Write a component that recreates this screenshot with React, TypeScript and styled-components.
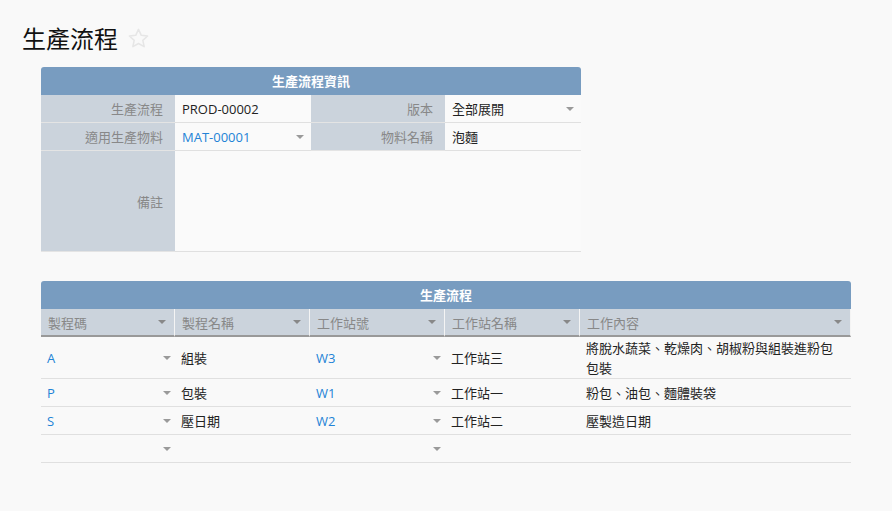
import React from "react";
import styled, { createGlobalStyle } from "styled-components";

const GlobalStyle = createGlobalStyle`
  html, body {
    margin: 0;
    padding: 0;
    background: #f9f9f9;
  }
  body {
    font-family: "Open Sans", "Noto Sans CJK TC", sans-serif;
    font-size: 13px;
    color: #222;
  }
`;

const Page = styled.div`
  padding: 18px 0 40px 41px;
  width: 892px;
  box-sizing: border-box;
`;

const TitleBar = styled.div`
  display: flex;
  align-items: center;
  gap: 9px;
  margin-left: -19px;
  height: 40px;
`;

const Title = styled.h1`
  margin: 0;
  font-family: "Noto Sans CJK TC", sans-serif;
  font-weight: 400;
  font-size: 24px;
  line-height: 40px;
  color: #111;
`;

const Section = styled.div<{ $width: number; $gap?: number }>`
  width: ${(p) => p.$width}px;
  margin-top: ${(p) => p.$gap ?? 0}px;
`;

const SectionHeader = styled.div`
  height: 28px;
  line-height: 28px;
  background: #789cc0;
  color: #fff;
  font-weight: 700;
  text-align: center;
  font-size: 13px;
  border-radius: 3px 3px 0 0;
`;

const FormGrid = styled.div`
  display: grid;
  grid-template-columns: 134px 136px 134px 136px;
`;

const Label = styled.div<{ $tall?: boolean }>`
  height: ${(p) => (p.$tall ? 101 : 28)}px;
  box-sizing: border-box;
  background: #cbd3dc;
  color: #888;
  padding-right: 12px;
  display: flex;
  align-items: center;
  justify-content: flex-end;
  border-bottom: 1px solid #e4e4e4;
`;

const Value = styled.div<{ $span?: number; $tall?: boolean; $link?: boolean }>`
  grid-column: span ${(p) => p.$span ?? 1};
  height: ${(p) => (p.$tall ? 101 : 28)}px;
  box-sizing: border-box;
  padding: 0 7px 0 7px;
  display: flex;
  align-items: center;
  color: ${(p) => (p.$link ? "#2383d6" : "#222")};
  background: #fafafa;
  border-bottom: 1px solid #e0e0e0;
`;

const Caret = styled.span<{ $light?: boolean }>`
  margin-left: auto;
  width: 0;
  height: 0;
  border-left: 4px solid transparent;
  border-right: 4px solid transparent;
  border-top: 4px solid ${(p) => (p.$light ? "#9a9a9a" : "#888")};
  flex-shrink: 0;
`;

const Grid = styled.div`
  display: grid;
  grid-template-columns: 134px 135px 135px 135px 271px;
`;

const ColHead = styled.div`
  height: 28px;
  box-sizing: border-box;
  background: #cbd3dc;
  color: #888;
  padding: 0 8px 0 7px;
  display: flex;
  align-items: center;
  border-bottom: 2px solid #999;
  border-right: 1px solid #f4f4f4;
  &:last-child {
    border-right: none;
  }
`;

const Cell = styled.div<{ $link?: boolean; $tall?: boolean }>`
  min-height: ${(p) => (p.$tall ? 42 : 28)}px;
  box-sizing: border-box;
  padding: 0 4px 0 6px;
  display: flex;
  align-items: center;
  line-height: 20px;
  color: ${(p) => (p.$link ? "#2383d6" : "#222")};
  border-bottom: 1px solid #e0e0e0;
`;

const Content = styled(Cell)`
  padding-right: 12px;
`;

const Star = () => (
  <svg width="23" height="23" viewBox="0 0 24 24" fill="none" stroke="#e6e6e6" strokeWidth="1.6" strokeLinejoin="round">
    <path d="M12 2.5l2.9 6.2 6.6.7-5 4.5 1.4 6.6L12 17.2l-5.9 3.3 1.4-6.6-5-4.5 6.6-.7z" />
  </svg>
);

const rows = [
  { code: "A", name: "組裝", ws: "W3", wsName: "工作站三", content: "將脫水蔬菜、乾燥肉、胡椒粉與組裝進粉包包裝", tall: true },
  { code: "P", name: "包裝", ws: "W1", wsName: "工作站一", content: "粉包、油包、麵體裝袋" },
  { code: "S", name: "壓日期", ws: "W2", wsName: "工作站二", content: "壓製造日期" },
  { code: "", name: "", ws: "", wsName: "", content: "" },
];

export default function App() {
  return (
    <>
      <GlobalStyle />
      <Page>
        <TitleBar>
          <Title>生產流程</Title>
          <Star />
        </TitleBar>

        <Section $width={540} $gap={9}>
          <SectionHeader>生產流程資訊</SectionHeader>
          <FormGrid>
            <Label>生產流程</Label>
            <Value>PROD-00002</Value>
            <Label>版本</Label>
            <Value>
              全部展開
              <Caret $light />
            </Value>
            <Label>適用生產物料</Label>
            <Value $link>
              MAT-00001
              <Caret $light />
            </Value>
            <Label>物料名稱</Label>
            <Value>泡麵</Value>
            <Label $tall>備註</Label>
            <Value $span={3} $tall />
          </FormGrid>
        </Section>

        <Section $width={810} $gap={29}>
          <SectionHeader>生產流程</SectionHeader>
          <Grid>
            {["製程碼", "製程名稱", "工作站號", "工作站名稱", "工作內容"].map((h) => (
              <ColHead key={h}>
                {h}
                <Caret />
              </ColHead>
            ))}
            {rows.map((r, i) => (
              <React.Fragment key={i}>
                <Cell $link $tall={r.tall}>
                  {r.code}
                  <Caret $light />
                </Cell>
                <Cell $tall={r.tall}>{r.name}</Cell>
                <Cell $link $tall={r.tall}>
                  {r.ws}
                  <Caret $light />
                </Cell>
                <Cell $tall={r.tall}>{r.wsName}</Cell>
                <Content $tall={r.tall}>{r.content}</Content>
              </React.Fragment>
            ))}
          </Grid>
        </Section>
      </Page>
    </>
  );
}
